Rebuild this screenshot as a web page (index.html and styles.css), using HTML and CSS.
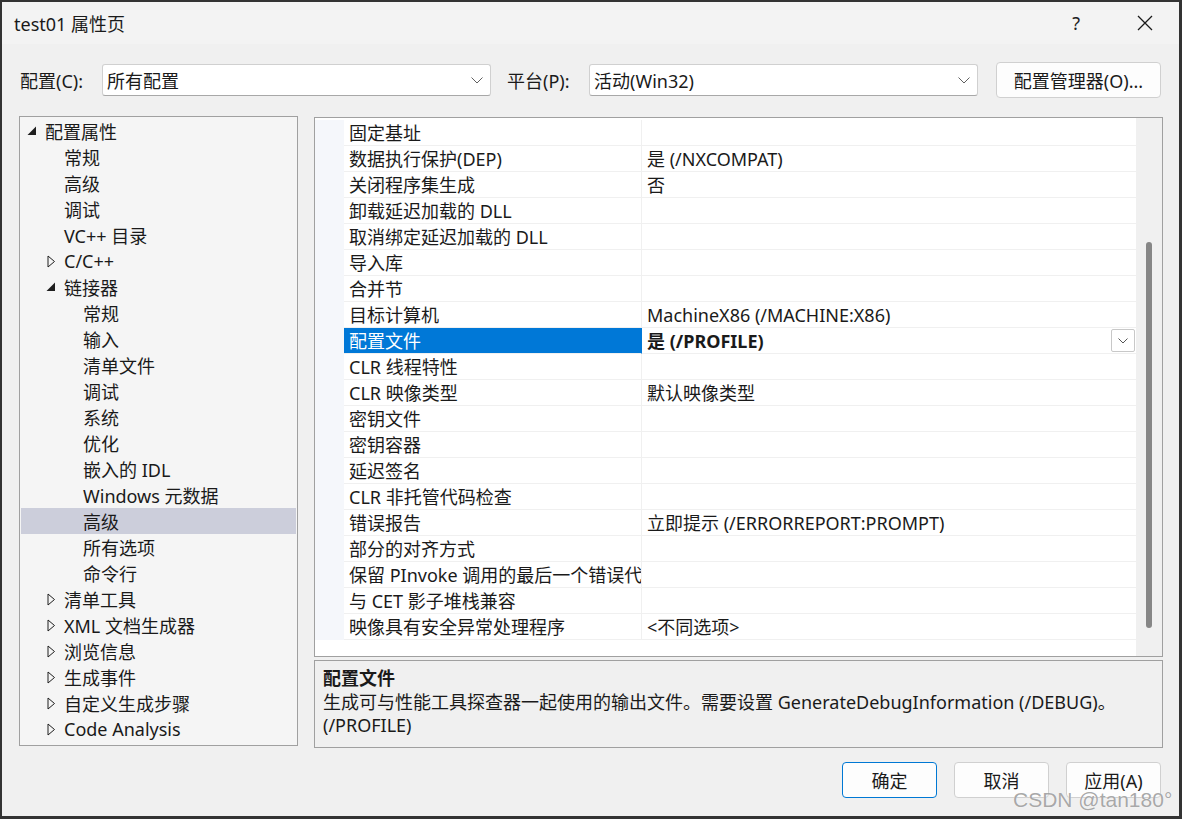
FILE: index.html
```html
<!DOCTYPE html>
<html lang="zh-CN">
<head>
    <meta charset="UTF-8">
    <title>test01 属性页</title>
    <link rel="stylesheet" href="styles.css">
</head>
<body>
    <div class="window">
        <div class="titlebar">
            <span class="title">test01 属性页</span>
            <span class="help">?</span>
            <svg class="close" width="16" height="16" viewBox="0 0 16 16"><path d="M1 1L15 15M15 1L1 15" stroke="#1a1a1a" stroke-width="1.3" fill="none"/></svg>
        </div>

        <div class="config-row">
            <span class="config-label">配置(C):</span>
            <div class="combo">
                <span>所有配置</span>
                <svg width="12" height="7" viewBox="0 0 12 7"><path d="M0.5 0.5L6 6L11.5 0.5" stroke="#606060" fill="none"/></svg>
            </div>
            <span class="config-label platform">平台(P):</span>
            <div class="combo">
                <span>活动(Win32)</span>
                <svg width="12" height="7" viewBox="0 0 12 7"><path d="M0.5 0.5L6 6L11.5 0.5" stroke="#606060" fill="none"/></svg>
            </div>
            <button class="btn mgr-btn">配置管理器(O)...</button>
        </div>

        <div class="main">
            <div class="tree">
                <div class="tree-row l0"><span class="exp"><svg width="10" height="10" viewBox="0 0 10 10"><path d="M9 0.5V9H0.5Z" fill="#1e1e1e"/></svg></span>配置属性</div>
                <div class="tree-row l1"><span class="exp"></span>常规</div>
                <div class="tree-row l1"><span class="exp"></span>高级</div>
                <div class="tree-row l1"><span class="exp"></span>调试</div>
                <div class="tree-row l1"><span class="exp"></span>VC++ 目录</div>
                <div class="tree-row l1"><span class="exp"><svg class="closed" width="9" height="13" viewBox="0 0 9 13"><path d="M1 1L7.5 6.5L1 12Z" stroke="#1e1e1e" fill="none"/></svg></span>C/C++</div>
                <div class="tree-row l1"><span class="exp"><svg width="10" height="10" viewBox="0 0 10 10"><path d="M9 0.5V9H0.5Z" fill="#1e1e1e"/></svg></span>链接器</div>
                <div class="tree-row l2"><span class="exp"></span>常规</div>
                <div class="tree-row l2"><span class="exp"></span>输入</div>
                <div class="tree-row l2"><span class="exp"></span>清单文件</div>
                <div class="tree-row l2"><span class="exp"></span>调试</div>
                <div class="tree-row l2"><span class="exp"></span>系统</div>
                <div class="tree-row l2"><span class="exp"></span>优化</div>
                <div class="tree-row l2"><span class="exp"></span>嵌入的 IDL</div>
                <div class="tree-row l2"><span class="exp"></span>Windows 元数据</div>
                <div class="tree-row l2 selected"><span class="exp"></span>高级</div>
                <div class="tree-row l2"><span class="exp"></span>所有选项</div>
                <div class="tree-row l2"><span class="exp"></span>命令行</div>
                <div class="tree-row l1"><span class="exp"><svg class="closed" width="9" height="13" viewBox="0 0 9 13"><path d="M1 1L7.5 6.5L1 12Z" stroke="#1e1e1e" fill="none"/></svg></span>清单工具</div>
                <div class="tree-row l1"><span class="exp"><svg class="closed" width="9" height="13" viewBox="0 0 9 13"><path d="M1 1L7.5 6.5L1 12Z" stroke="#1e1e1e" fill="none"/></svg></span>XML 文档生成器</div>
                <div class="tree-row l1"><span class="exp"><svg class="closed" width="9" height="13" viewBox="0 0 9 13"><path d="M1 1L7.5 6.5L1 12Z" stroke="#1e1e1e" fill="none"/></svg></span>浏览信息</div>
                <div class="tree-row l1"><span class="exp"><svg class="closed" width="9" height="13" viewBox="0 0 9 13"><path d="M1 1L7.5 6.5L1 12Z" stroke="#1e1e1e" fill="none"/></svg></span>生成事件</div>
                <div class="tree-row l1"><span class="exp"><svg class="closed" width="9" height="13" viewBox="0 0 9 13"><path d="M1 1L7.5 6.5L1 12Z" stroke="#1e1e1e" fill="none"/></svg></span>自定义生成步骤</div>
                <div class="tree-row l1"><span class="exp"><svg class="closed" width="9" height="13" viewBox="0 0 9 13"><path d="M1 1L7.5 6.5L1 12Z" stroke="#1e1e1e" fill="none"/></svg></span>Code Analysis</div>
            </div>

            <div class="side">
                <div class="grid">
                    <div class="grid-body">
                        <div class="prop"><span class="gut"></span><span class="name">固定基址</span><span class="val"></span></div>
                        <div class="prop"><span class="gut"></span><span class="name">数据执行保护(DEP)</span><span class="val">是 (/NXCOMPAT)</span></div>
                        <div class="prop"><span class="gut"></span><span class="name">关闭程序集生成</span><span class="val">否</span></div>
                        <div class="prop"><span class="gut"></span><span class="name">卸载延迟加载的 DLL</span><span class="val"></span></div>
                        <div class="prop"><span class="gut"></span><span class="name">取消绑定延迟加载的 DLL</span><span class="val"></span></div>
                        <div class="prop"><span class="gut"></span><span class="name">导入库</span><span class="val"></span></div>
                        <div class="prop"><span class="gut"></span><span class="name">合并节</span><span class="val"></span></div>
                        <div class="prop"><span class="gut"></span><span class="name">目标计算机</span><span class="val">MachineX86 (/MACHINE:X86)</span></div>
                        <div class="prop selected"><span class="gut"></span><span class="name">配置文件</span><span class="val"><b>是 (/PROFILE)</b><span class="val-drop"><svg width="10" height="6" viewBox="0 0 10 6"><path d="M0.5 0.5L5 5L9.5 0.5" stroke="#555" fill="none"/></svg></span></span></div>
                        <div class="prop"><span class="gut"></span><span class="name">CLR 线程特性</span><span class="val"></span></div>
                        <div class="prop"><span class="gut"></span><span class="name">CLR 映像类型</span><span class="val">默认映像类型</span></div>
                        <div class="prop"><span class="gut"></span><span class="name">密钥文件</span><span class="val"></span></div>
                        <div class="prop"><span class="gut"></span><span class="name">密钥容器</span><span class="val"></span></div>
                        <div class="prop"><span class="gut"></span><span class="name">延迟签名</span><span class="val"></span></div>
                        <div class="prop"><span class="gut"></span><span class="name">CLR 非托管代码检查</span><span class="val"></span></div>
                        <div class="prop"><span class="gut"></span><span class="name">错误报告</span><span class="val">立即提示 (/ERRORREPORT:PROMPT)</span></div>
                        <div class="prop"><span class="gut"></span><span class="name">部分的对齐方式</span><span class="val"></span></div>
                        <div class="prop"><span class="gut"></span><span class="name">保留 PInvoke 调用的最后一个错误代码</span><span class="val"></span></div>
                        <div class="prop"><span class="gut"></span><span class="name">与 CET 影子堆栈兼容</span><span class="val"></span></div>
                        <div class="prop"><span class="gut"></span><span class="name">映像具有安全异常处理程序</span><span class="val">&lt;不同选项&gt;</span></div>
                    </div>
                    <div class="scroll"><div class="thumb"></div></div>
                </div>
                <div class="desc">
                    <div class="desc-title">配置文件</div>
                    <div class="desc-text">生成可与性能工具探查器一起使用的输出文件。需要设置 GenerateDebugInformation (/DEBUG)。<br>(/PROFILE)</div>
                </div>
            </div>
        </div>

        <div class="actions">
            <button class="btn default">确定</button>
            <button class="btn">取消</button>
            <button class="btn">应用(A)</button>
        </div>

        <div class="watermark">CSDN @tan180°</div>
    </div>
</body>
</html>
```

FILE: styles.css
```css
body {
    margin: 0;
    background: #333333;
    font-family: "Noto Sans", "Noto Sans CJK SC", sans-serif;
    font-size: 18px;
    color: #1a1a1a;
    overflow: hidden;
}

.window {
    position: relative;
    margin: 2px 0 0 2px;
    width: 1177px;
    height: 814px;
    background: #f0f0f0;
    display: flex;
    flex-direction: column;
}

.titlebar {
    height: 42px;
    flex: none;
    background: #f3f3f3;
    display: flex;
    align-items: center;
    padding-left: 12px;
    font-size: 18px;
}

.title {
    flex: 1;
}

.help {
    margin-right: 57px;
    font-size: 18px;
    color: #222;
}

.close {
    margin-right: 26px;
}

.config-row {
    display: flex;
    align-items: center;
    height: 36px;
    margin-top: 18px;
    padding-left: 18px;
}

.config-label {
    width: 82px;
    flex: none;
}

.platform {
    margin-left: 16px;
}

.combo {
    width: 389px;
    height: 32px;
    box-sizing: border-box;
    background: #fff;
    border: 1px solid #d0d0d0;
    border-bottom-color: #a8a8a8;
    border-radius: 3px;
    display: flex;
    align-items: center;
    justify-content: space-between;
    padding: 0 7px 0 4px;
}

.btn {
    box-sizing: border-box;
    background: #fdfdfd;
    border: 1px solid #d0d0d0;
    border-radius: 4px;
    font: inherit;
    color: inherit;
    padding: 0;
}

.mgr-btn {
    margin-left: 18px;
    width: 165px;
    height: 36px;
}

.main {
    display: flex;
    gap: 16px;
    margin-top: 18px;
    padding-left: 17px;
    height: 632px;
}

.tree {
    width: 279px;
    height: 630px;
    box-sizing: border-box;
    border: 1px solid #a0a0a0;
    background: #f5f5f5;
    padding: 1px;
}

.tree-row {
    height: 26px;
    display: flex;
    align-items: center;
    white-space: nowrap;
}

.tree-row.l0 { padding-left: 6px; }
.tree-row.l1 { padding-left: 25px; }
.tree-row.l2 { padding-left: 44px; }

.tree-row.selected {
    background: #cccedb;
}

.exp {
    width: 18px;
    height: 26px;
    flex: none;
    display: flex;
    align-items: center;
}

.exp .closed {
    margin-left: 1px;
}

.side {
    width: 849px;
    margin-top: 1px;
    display: flex;
    flex-direction: column;
    gap: 3px;
}

.grid {
    height: 540px;
    flex: none;
    box-sizing: border-box;
    border: 1px solid #a0a0a0;
    background: #fff;
    display: flex;
}

.grid-body {
    flex: 1;
    padding-top: 2px;
}

.prop {
    display: flex;
    height: 26px;
    line-height: 26px;
}

.gut {
    width: 29px;
    flex: none;
    background: #f5f7fb;
}

.name {
    width: 298px;
    flex: none;
    box-sizing: border-box;
    padding-left: 5px;
    border-bottom: 1px solid #f0f0f0;
    border-right: 1px solid #f0f0f0;
    overflow: hidden;
    white-space: nowrap;
}

.val {
    flex: 1;
    padding-left: 5px;
    border-bottom: 1px solid #f0f0f0;
    white-space: nowrap;
    display: flex;
    align-items: center;
}

.prop.selected .name {
    background: #0078d7;
    color: #fff;
    border-right-color: #0078d7;
}

.val b {
    flex: 1;
}

.val-drop {
    width: 24px;
    height: 23px;
    box-sizing: border-box;
    margin-right: 1px;
    border: 1px solid #c8c8c8;
    border-radius: 2px;
    background: #fff;
    display: flex;
    align-items: center;
    justify-content: center;
}

.scroll {
    width: 26px;
    flex: none;
    background: #f0f0f0;
}

.thumb {
    width: 6px;
    height: 386px;
    margin: 124px 0 0 10px;
    border-radius: 3px;
    background: #868686;
}

.desc {
    height: 88px;
    flex: none;
    box-sizing: border-box;
    border: 1px solid #a0a0a0;
    background: #f0f0f0;
    padding: 4px 8px 0;
}

.desc-title {
    font-weight: 700;
    line-height: 26px;
}

.desc-text {
    line-height: 23px;
    white-space: nowrap;
}

.actions {
    display: flex;
    justify-content: flex-end;
    gap: 17px;
    margin-top: 14px;
    padding-right: 18px;
}

.actions .btn {
    width: 95px;
    height: 36px;
}

.actions .btn.default {
    border-color: #0078d4;
}

.watermark {
    position: absolute;
    left: 1011px;
    top: 786px;
    font-family: "Liberation Sans", sans-serif;
    font-size: 21px;
    color: rgba(130, 130, 130, 0.7);
    text-shadow: 0 0 1px #fff;
    white-space: nowrap;
}
```
